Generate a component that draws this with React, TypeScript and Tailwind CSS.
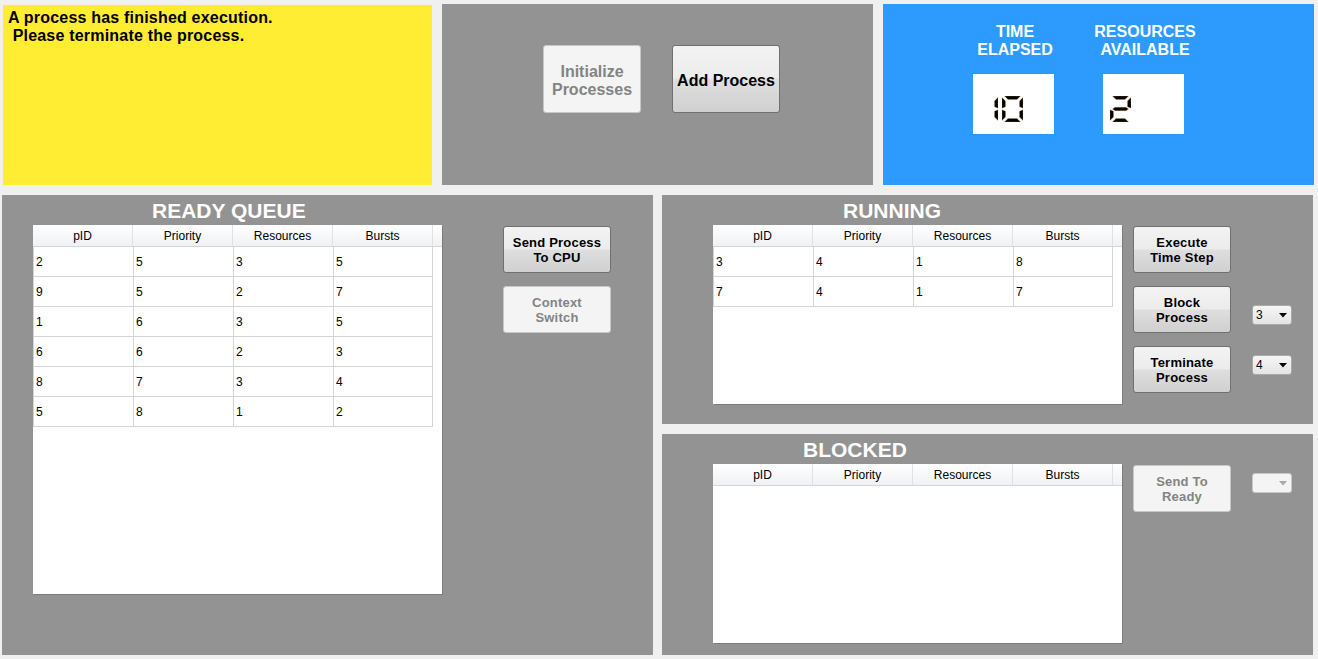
import React from "react";

const SEG: Record<string, string> = {
  a: "2.5,0 18.5,0 15,3.5 6,3.5",
  b: "21,1.5 21,12.2 17.5,10.8 17.5,5",
  c: "21,13.8 21,24.5 17.5,21 17.5,15.2",
  d: "6,22.5 15,22.5 18.5,26 2.5,26",
  e: "0,13.8 3.5,15.2 3.5,21 0,24.5",
  f: "0,1.5 3.5,5 3.5,10.8 0,12.2",
  g: "2.5,13 5,11.3 16,11.3 18.5,13 16,14.7 5,14.7",
};

const DIGITS: Record<string, string> = {
  "0": "abcdef",
  "1": "bc",
  "2": "abged",
  "3": "abgcd",
  "4": "fgbc",
  "5": "afgcd",
  "6": "afgedc",
  "7": "abc",
  "8": "abcdefg",
  "9": "abcdfg",
};

function LcdDigit({ d }: { d: string }) {
  const segs = DIGITS[d] || "";
  return (
    <svg width="21" height="26" viewBox="0 0 21 26" className="block">
      {segs.split("").map((s) => (
        <polygon key={s} points={SEG[s]} fill="#000" stroke="#c98a3a" strokeWidth="0.3" />
      ))}
    </svg>
  );
}

function Btn({
  lines,
  disabled,
  className,
}: {
  lines: string[];
  disabled?: boolean;
  className: string;
}) {
  return (
    <div
      className={
        (disabled
          ? "bg-[#f4f4f4] border border-[#c4c8ca] text-[#838383] "
          : "bg-[linear-gradient(to_bottom,#f3f3f3_0%,#ececec_48%,#dedede_52%,#d0d0d0_100%)] border border-[#707070] text-black ") +
        "rounded-[3px] flex flex-col items-center justify-center font-bold " +
        className
      }
    >
      {lines.map((l, i) => (
        <span key={i}>{l}</span>
      ))}
    </div>
  );
}

function Dropdown({ value, disabled }: { value: string; disabled?: boolean }) {
  return (
    <div
      className={
        "w-[40px] h-[20px] rounded-[3px] border flex items-center justify-between pl-[3px] pr-[4px] text-[12px] " +
        (disabled
          ? "bg-[#f4f4f4] border-[#c4c8ca]"
          : "bg-[linear-gradient(to_bottom,#f6f6f6,#e4e4e4)] border-[#a9a9a9]")
      }
    >
      <span>{value}</span>
      <svg width="8" height="5" viewBox="0 0 8 5">
        <polygon points="0,0 8,0 4,4.5" fill={disabled ? "#a8a8a8" : "#000"} />
      </svg>
    </div>
  );
}

const HEADERS = ["pID", "Priority", "Resources", "Bursts"];

function Table({ rows, h }: { rows: string[][]; h: string }) {
  return (
    <div className={"w-[409px] bg-white shadow-[1px_1px_0_#7c7c7c] flex flex-col " + h}>
      <div className="flex h-[22px] bg-[linear-gradient(to_bottom,#ffffff,#eff1f4)] border-b border-[#d5d5d5]">
        {HEADERS.map((x) => (
          <div
            key={x}
            className="w-[100px] border-r border-[#e2e2e2] flex items-center justify-center text-[12px] text-black pt-[1px]"
          >
            {x}
          </div>
        ))}
      </div>
      {rows.map((r, i) => (
        <div key={i} className="flex h-[30px] w-[400px]">
          {r.map((c, j) => (
            <div
              key={j}
              className={
                "w-[100px] h-[30px] border-l border-b border-[#d4d4d4] pl-[2px] flex items-center text-[12px] text-black" +
                (j === 3 ? " border-r" : "")
              }
            >
              {c}
            </div>
          ))}
        </div>
      ))}
    </div>
  );
}

const TITLE = "text-white font-bold text-[21px] leading-[24px] h-[24px] mb-[2px]";
const SMALLBTN = "w-[98px] h-[47px] text-[13px] leading-[15px] tracking-[0.2px]";

export default function App() {
  return (
    <div className="w-[1318px] h-[659px] bg-[#f0f0f0] pt-[4px] font-['Liberation_Sans',Arial,sans-serif] overflow-hidden">
      {/* Top row */}
      <div className="flex h-[181px] pl-[3px] gap-[10px]">
        <div className="w-[429px] h-[180px] mt-[1px] bg-[#ffed33] pl-[5px] pt-[4px] text-[16px] leading-[18px] tracking-[0.2px] font-bold text-black whitespace-pre">
          <div>A process has finished execution.</div>
          <div> Please terminate the process.</div>
        </div>
        <div className="w-[431px] bg-[#939393] flex pl-[101px] pt-[41px] gap-[31px]">
          <Btn
            disabled
            lines={["Initialize", "Processes"]}
            className="w-[98px] h-[68px] text-[16px] leading-[18px] pt-[3px]"
          />
          <Btn lines={["Add Process"]} className="w-[108px] h-[68px] text-[16px] pt-[4px]" />
        </div>
        <div className="w-[431px] bg-[#2d9bfd] flex pl-[72px] pt-[19px] gap-[10px]">
          <div className="w-[120px] flex flex-col">
            <div className="text-white font-bold text-[16px] leading-[18px] text-center">
              <div>TIME</div>
              <div>ELAPSED</div>
            </div>
            <div className="mt-[15px] ml-[18px] w-[81px] h-[60px] bg-white flex items-start pt-[22px] pl-[4px] gap-[4px]">
              <LcdDigit d="1" />
              <LcdDigit d="0" />
            </div>
          </div>
          <div className="w-[120px] flex flex-col">
            <div className="text-white font-bold text-[16px] leading-[18px] text-center">
              <div>RESOURCES</div>
              <div>AVAILABLE</div>
            </div>
            <div className="mt-[15px] ml-[18px] w-[81px] h-[60px] bg-white flex items-start pt-[22px] pl-[7px]">
              <LcdDigit d="2" />
            </div>
          </div>
        </div>
      </div>

      {/* Bottom row */}
      <div className="flex mt-[10px] pl-[2px] gap-[9px]">
        {/* Ready queue */}
        <div className="w-[651px] h-[460px] bg-[#939393] flex pl-[31px] pt-[4px]">
          <div className="flex flex-col">
            <div className={TITLE + " pl-[119px]"}>READY QUEUE</div>
            <Table
              h="h-[369px]"
              rows={[
                ["2", "5", "3", "5"],
                ["9", "5", "2", "7"],
                ["1", "6", "3", "5"],
                ["6", "6", "2", "3"],
                ["8", "7", "3", "4"],
                ["5", "8", "1", "2"],
              ]}
            />
          </div>
          <div className="flex flex-col ml-[61px] mt-[27px] gap-[13px]">
            <Btn lines={["Send Process", "To CPU"]} className="w-[108px] h-[47px] text-[13px] leading-[15px] tracking-[0.2px]" />
            <Btn disabled lines={["Context", "Switch"]} className="w-[108px] h-[47px] text-[13px] leading-[15px] tracking-[0.2px]" />
          </div>
        </div>

        {/* Right column */}
        <div className="flex flex-col gap-[10px]">
          <div className="w-[651px] h-[229px] bg-[#939393] flex pl-[51px] pt-[4px]">
            <div className="flex flex-col">
              <div className={TITLE + " pl-[130px]"}>RUNNING</div>
              <Table
                h="h-[179px]"
                rows={[
                  ["3", "4", "1", "8"],
                  ["7", "4", "1", "7"],
                ]}
              />
            </div>
            <div className="flex flex-col ml-[11px] mt-[27px] gap-[13px]">
              <Btn lines={["Execute", "Time Step"]} className={SMALLBTN} />
              <div className="flex items-start">
                <Btn lines={["Block", "Process"]} className={SMALLBTN} />
                <div className="ml-[21px] mt-[19px]">
                  <Dropdown value="3" />
                </div>
              </div>
              <div className="flex items-start">
                <Btn lines={["Terminate", "Process"]} className={SMALLBTN} />
                <div className="ml-[21px] mt-[9px]">
                  <Dropdown value="4" />
                </div>
              </div>
            </div>
          </div>
          <div className="w-[651px] h-[221px] bg-[#939393] flex pl-[51px] pt-[4px]">
            <div className="flex flex-col">
              <div className={TITLE + " pl-[90px]"}>BLOCKED</div>
              <Table h="h-[179px]" rows={[]} />
            </div>
            <div className="flex items-start ml-[11px] mt-[27px]">
              <Btn disabled lines={["Send To", "Ready"]} className={SMALLBTN} />
              <div className="ml-[21px] mt-[8px]">
                <Dropdown value="" disabled />
              </div>
            </div>
          </div>
        </div>
      </div>
    </div>
  );
}
